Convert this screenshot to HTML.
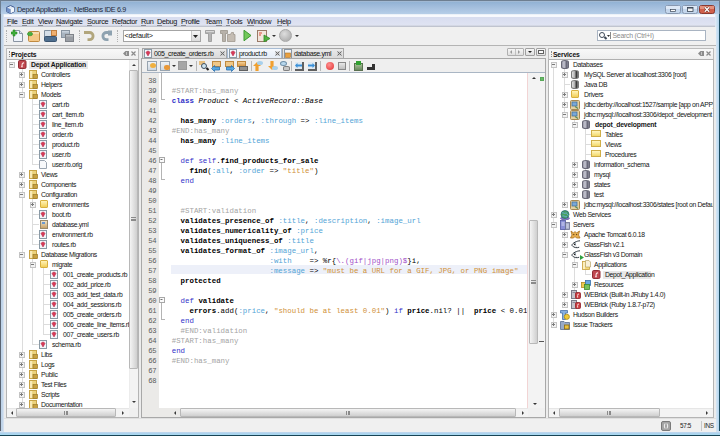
<!DOCTYPE html><html><head><meta charset="utf-8"><style>
*{margin:0;padding:0;box-sizing:border-box}
html,body{width:720px;height:436px;overflow:hidden;background:#f0f0f0}
body{position:relative}
div{position:absolute}
.ui{font-family:"Liberation Sans",sans-serif;font-size:6.8px;letter-spacing:-0.34px;line-height:8px;color:#151515;white-space:nowrap}
.ui b,.bold{font-weight:bold;letter-spacing:-0.17px}
.code{font-family:"Liberation Mono",monospace;font-size:7.41px;line-height:10px;color:#000;white-space:pre}
.exp{width:5px;height:5px;border:1px solid #b4b4b4;border-radius:1px;background:linear-gradient(#ffffff,#e0e0e0)}
.exp i{position:absolute;background:#5a5a5a}
.exp i.h{left:0;top:1px;width:3px;height:1px}
.exp i.v{left:1px;top:0;width:1px;height:3px}
.rbf{width:8px;height:9px;border:1px solid #8a96a6;background:linear-gradient(#ffffff,#e3e8f0)}
.rbf i{position:absolute;left:1px;top:2px;width:4px;height:4px;border-radius:50%;background:#d4303a}
.plf{width:8px;height:9px;border:1px solid #9aa4b2;background:linear-gradient(#ffffff,#e8ecf2)}
.ymf{width:8px;height:9px;border:1px solid #9a8a6a;background:linear-gradient(#efe3c8,#c9a46a)}
.ymf i{position:absolute;left:1px;top:1px;width:3px;height:2px;background:#6a9ad0}
.fold{width:8px;height:8px;background:linear-gradient(#fbe7a0,#e9bf55);border:1px solid #d2a640;border-radius:1px}
.fold i{position:absolute;left:3px;top:3px;width:4px;height:4px;background:#c99b30;border:1px solid #9c7420}
.fold2{width:8px;height:8px;background:linear-gradient(#fff3b8,#f2cf5a);border:1px solid #d8b040;border-radius:1px}
.fold3{width:10px;height:7px;background:linear-gradient(#fff6c0,#f3d86a);border:1px solid #cfae48}
.proj{width:8px;height:9px;background:linear-gradient(#e05a5a,#b52a2a);border:1px solid #8c2020;border-radius:1px}
.proj i{position:absolute;left:2px;top:1px;width:3px;height:6px;border-left:1.5px solid #fff;border-top:1.5px solid #fff}
.db{width:8px;height:9px;border-radius:4px/2px;background:linear-gradient(90deg,#e0e0e0,#b8b8b8 40%,#3a3a3a 75%,#8a8a8a);border:1px solid #7a7a7a}
.dbd{background:linear-gradient(90deg,#9a9aa8,#c8c8d4 35%,#6a6a7a 75%,#8a8a98);border-color:#6a6a78}
u{text-decoration:none;border-bottom:1px solid rgba(40,40,40,.45);display:inline-block;line-height:7px}
.vl{border-left:1px solid #dcdcdc}
.hl{border-top:1px solid #dcdcdc}
</style></head><body><div style="left:0;top:0;width:720px;height:17px;background:linear-gradient(#7a8696 0,#7a8696 1px,#b0c0d4 1px,#92b2d4 2px,#a6c0de 8px,#b6cee8 14px,#f6f8fc 14.6px,#fbfcff 16.5px)"></div>
<div style="left:0px;top:0px;width:720px;height:1px;background:#6e7e90"></div>
<div style="left:0px;top:0px;width:1px;height:16px;background:#6e7e90"></div>
<div style="left:719px;top:0px;width:1px;height:16px;background:#6e7e90"></div>
<svg style="position:absolute;left:6px;top:5px" width="9" height="9" viewBox="0 0 9 9"><path d="M4.5 .5L8.3 2.3V6.7L4.5 8.5L.7 6.7V2.3z" fill="#dfe8f4" stroke="#34508a" stroke-width=".9" stroke-linejoin="round"/><path d="M.9 2.5L4.5 4.2V8.3L.9 6.6z" fill="#7090c8"/><path d="M4.5 4.2L8.1 2.5V6.6L4.5 8.3z" fill="#f4f8fc"/><path d="M4.5 4.2V8.3" stroke="#5a78a8" stroke-width=".5"/></svg>
<div class="ui" style="left:17px;top:6px;font-size:7.2px;letter-spacing:-0.35px;color:#1e2a3a">Depot Application -&nbsp; NetBeans IDE 6.9</div>
<svg style="position:absolute;left:665px;top:5px" width="16" height="9" viewBox="0 0 16 9"><rect x=".5" y=".5" width="15" height="8" rx="2" fill="#c4d6ec" stroke="#8898b0"/><rect x="1" y="1" width="14" height="3" fill="#dde8f6"/><rect x="5.5" y="4.5" width="5" height="2" fill="#fafafa" stroke="#3a4656" stroke-width=".7"/></svg>
<svg style="position:absolute;left:682px;top:5px" width="16" height="9" viewBox="0 0 16 9"><rect x=".5" y=".5" width="15" height="8" rx="2" fill="#c4d6ec" stroke="#8898b0"/><rect x="1" y="1" width="14" height="3" fill="#dde8f6"/><rect x="5.5" y="2.5" width="5.5" height="4" fill="#f4f4f4" stroke="#3a4656" stroke-width=".8"/><rect x="5.5" y="2.3" width="5.5" height="1.2" fill="#3a4656"/></svg>
<svg style="position:absolute;left:699px;top:5px" width="16" height="9" viewBox="0 0 16 9"><rect x=".5" y=".5" width="15" height="8" rx="2" fill="#d0604c" stroke="#8a3a30"/><rect x="1" y="1" width="14" height="3" fill="#e4907c"/><path d="M5.8 2.2L10.2 6.8M10.2 2.2L5.8 6.8" stroke="#5a2018" stroke-width="2.2"/><path d="M5.8 2.2L10.2 6.8M10.2 2.2L5.8 6.8" stroke="#fff" stroke-width="1.3"/></svg>
<div style="left:0px;top:14px;width:4px;height:422px;background:linear-gradient(90deg,#5a6472 0,#5a6472 1px,#bcd2e8 1px,#c4d6ea 3px,#e6eaf2 4px)"></div>
<div style="left:715px;top:14px;width:5px;height:422px;background:linear-gradient(90deg,#e4ecf6,#b8d8f0 70%,#a4d4f0 80%,#1c4c60 80%)"></div>
<div style="left:0px;top:431px;width:720px;height:5px;background:linear-gradient(#dde6f0,#b0d0ec 40%,#a8d8f0 70%,#1a4a5e 74%,#16404f)"></div>
<div style="left:4px;top:16px;width:711px;height:11px;background:linear-gradient(#f8f9fd 0,#f8f9fd .5px,#d8ddef 1.5px,#dfe3f2 9px,#c8ccd6 10px,#b8bcc8 11px)"></div>
<div class="ui" style="left:7px;top:17.6px;font-size:7.3px;letter-spacing:-0.3px;color:#111"><u>F</u>ile</div>
<div class="ui" style="left:22px;top:17.6px;font-size:7.3px;letter-spacing:-0.3px;color:#111"><u>E</u>dit</div>
<div class="ui" style="left:38px;top:17.6px;font-size:7.3px;letter-spacing:-0.3px;color:#111"><u>V</u>iew</div>
<div class="ui" style="left:56px;top:17.6px;font-size:7.3px;letter-spacing:-0.3px;color:#111"><u>N</u>avigate</div>
<div class="ui" style="left:87px;top:17.6px;font-size:7.3px;letter-spacing:-0.3px;color:#111"><u>S</u>ource</div>
<div class="ui" style="left:112px;top:17.6px;font-size:7.3px;letter-spacing:-0.3px;color:#111">Re<u>f</u>actor</div>
<div class="ui" style="left:141px;top:17.6px;font-size:7.3px;letter-spacing:-0.3px;color:#111"><u>R</u>un</div>
<div class="ui" style="left:157px;top:17.6px;font-size:7.3px;letter-spacing:-0.3px;color:#111"><u>D</u>ebug</div>
<div class="ui" style="left:181px;top:17.6px;font-size:7.3px;letter-spacing:-0.3px;color:#111"><u>P</u>rofile</div>
<div class="ui" style="left:205px;top:17.6px;font-size:7.3px;letter-spacing:-0.3px;color:#111">Tea<u>m</u></div>
<div class="ui" style="left:226px;top:17.6px;font-size:7.3px;letter-spacing:-0.3px;color:#111"><u>T</u>ools</div>
<div class="ui" style="left:247px;top:17.6px;font-size:7.3px;letter-spacing:-0.3px;color:#111"><u>W</u>indow</div>
<div class="ui" style="left:277px;top:17.6px;font-size:7.3px;letter-spacing:-0.3px;color:#111"><u>H</u>elp</div>
<div style="left:4px;top:27px;width:712px;height:18px;background:#f0f0f0"></div>
<div style="left:4px;top:45px;width:712px;height:1px;background:#b4b4b4"></div>
<div style="left:6px;top:30px;width:1px;height:12px;border-left:1px dotted #b0b0b0"></div>
<div style="left:79px;top:30px;width:1px;height:12px;border-left:1px dotted #b0b0b0"></div>
<div style="left:117px;top:30px;width:1px;height:12px;border-left:1px dotted #b0b0b0"></div>
<svg style="position:absolute;left:11px;top:29px" width="13" height="14" viewBox="0 0 13 14"><path d="M2.5 1.5h6l3 3v8h-9z" fill="#eef3fa" stroke="#8a94a2"/><path d="M8.5 1.5v3h3" fill="#d8e2ee" stroke="#8a94a2"/><path d="M2 1v2H0v2h2v2h2V5h2V3H4V1z" fill="#3cae3a" stroke="#2a8a28" stroke-width=".6"/></svg>
<svg style="position:absolute;left:27px;top:29px" width="14" height="14" viewBox="0 0 14 14"><rect x="1.5" y="2.5" width="11" height="10" rx="1" fill="#f4c888" stroke="#c08a40"/><rect x="2" y="3" width="10" height="2" fill="#f8dcb0"/><ellipse cx="3" cy="5" rx="2.6" ry="1.8" fill="#48b040" stroke="#2a8a28" stroke-width=".6"/></svg>
<svg style="position:absolute;left:43px;top:29px" width="15" height="14" viewBox="0 0 15 14"><path d="M1.5 1.5h6l1 1v6h-7z" fill="#d4dee8" stroke="#8090a0"/><rect x="8.5" y="1.5" width="5" height="5" fill="#f0b070" stroke="#c08040"/><rect x="1.5" y="7.5" width="12" height="5" rx="1" fill="#4e6e8e" stroke="#3a5470"/></svg>
<svg style="position:absolute;left:61px;top:29px" width="14" height="14" viewBox="0 0 14 14"><rect x="0.5" y="1.5" width="8" height="7" fill="#a8b4c0" stroke="#8894a0"/><rect x="1" y="2" width="7" height="1.5" fill="#c8d2dc"/><rect x="4.5" y="5.5" width="8" height="7" fill="#9a9ea4" stroke="#7e8288"/><rect x="5" y="6" width="7" height="1.5" fill="#b8bcc0"/></svg>
<svg style="position:absolute;left:83px;top:29px" width="13" height="14" viewBox="0 0 13 14"><path d="M1 3.5H6.5A3.6 3.6 0 0 1 6.5 10.7H4.5" fill="none" stroke="#b2a67c" stroke-width="2.8"/></svg>
<svg style="position:absolute;left:100px;top:29px" width="13" height="14" viewBox="0 0 13 14"><path d="M12 3.5H6.5A3.6 3.6 0 0 0 6.5 10.7H8.5" fill="none" stroke="#8ea2b0" stroke-width="2.8"/><rect x="8" y="1.5" width="4" height="5" fill="#8ea2b0"/></svg>
<div style="left:123px;top:30px;width:78px;height:12px;border:1px solid #a4a4a4;background:#fff"></div>
<div class="ui" style="left:124.5px;top:32px;font-size:7.2px;letter-spacing:-0.2px;color:#111">&lt;default&gt;</div>
<div style="left:191px;top:31px;width:9px;height:10px;background:linear-gradient(#f4f4f4,#dcdcdc);border-left:1px solid #c8c8c8"></div>
<div style="left:193px;top:35px;width:5px;height:3px;background:#222;clip-path:polygon(0 0,100% 0,50% 100%)"></div>
<svg style="position:absolute;left:205px;top:29px" width="11" height="13" viewBox="0 0 11 13"><path d="M0.5 1.5h9v3h-3v8h-3v-8h-3z" fill="#b4b4b4" stroke="#959595" stroke-width=".8"/><rect x="1" y="2" width="8" height="1" fill="#d8d8d8"/></svg>
<svg style="position:absolute;left:220px;top:29px" width="16" height="13" viewBox="0 0 16 13"><path d="M0.5 1.5h7v3h-2v8h-3v-8h-2z" fill="#b8b2aa" stroke="#9a948c" stroke-width=".8"/><path d="M7.5 5.5h3l1-2h2v2h1.5v7h-7.5z" fill="#c4bcb2" stroke="#a0988e" stroke-width=".8"/></svg>
<svg style="position:absolute;left:243px;top:29px" width="9" height="13" viewBox="0 0 9 13"><path d="M1 1.2L8 6.5 1 11.8z" fill="#72c85a" stroke="#3a9a30" stroke-width="1"/></svg>
<svg style="position:absolute;left:256px;top:29px" width="16" height="13" viewBox="0 0 16 13"><rect x="1.5" y="1.5" width="9" height="11" fill="#f2e6dc" stroke="#9a7a68"/><path d="M3 4h3M3 6h2" stroke="#d84a3a" stroke-width="1.2"/><path d="M8 6l6 3.5-6 3.5z" fill="#52b040" stroke="#2e8a26" stroke-width=".8"/></svg>
<div style="left:272px;top:35px;width:4px;height:2px;background:#333;clip-path:polygon(0 0,100% 0,50% 100%)"></div>
<div style="left:279px;top:29px;width:13px;height:13px;border-radius:50%;background:radial-gradient(circle at 40% 35%,#dedede,#b4b4b4 70%,#a4a4a4);border:1px solid #a8a8a8"></div>
<div style="left:295px;top:35px;width:4px;height:2px;background:#333;clip-path:polygon(0 0,100% 0,50% 100%)"></div>
<div style="left:597px;top:30px;width:109px;height:11px;border:1px solid #a9b4c2;background:#fff"></div>
<div style="left:599px;top:32px;width:6px;height:6px;border:1.5px solid #404a58;border-radius:50%"></div><div style="left:604px;top:37px;width:3px;height:2px;background:#404a58;transform:rotate(45deg)"></div>
<div style="left:607px;top:35px;width:3px;height:2px;background:#333;clip-path:polygon(0 0,100% 0,50% 100%)"></div>
<div style="left:610px;top:32px;width:1px;height:7px;background:#888"></div>
<div class="ui" style="left:612.5px;top:32px;font-size:6.9px;letter-spacing:-0.25px;color:#8a8a8a">Search (Ctrl+I)</div>
<div style="left:4px;top:46px;width:712px;height:372px;background:#ececec"></div>
<div style="left:6px;top:48px;width:133px;height:370px;border:1px solid #b4b4b4;background:#fff"></div>
<div style="left:6px;top:48px;width:133px;height:12px;border:1px solid #bcbcbc;border-bottom-color:#b0b0b0;background:linear-gradient(#f8f8f8,#eeeeee)"></div>
<div style="left:9px;top:51px;width:1px;height:6px;border-left:1px dotted #8a8a8a"></div>
<div class="ui" style="left:11px;top:50.6px;font-weight:bold;font-size:6.8px;letter-spacing:-0.17px;color:#111">Projects</div>
<svg style="position:absolute;left:123px;top:51px" width="6" height="6" viewBox="0 0 6 6"><path d="M0 2.5L2.5 0H6V5H2.5z" fill="#8c8c8c"/><path d="M3.5 1V4" stroke="#d0d0d0" stroke-width=".8"/></svg>
<svg style="position:absolute;left:131px;top:51px" width="5" height="5" viewBox="0 0 5 5"><path d="M.5 .5L4.5 4.5M4.5 .5L.5 4.5" stroke="#8a8a8a" stroke-width="1.2"/></svg>
<div style="left:129px;top:60px;width:9px;height:348px;background:#f3f3f3;border-left:1px solid #ececec"></div>
<div style="left:132px;top:64px;width:4px;height:2px;background:#3a3a3a;clip-path:polygon(50% 0,100% 100%,0 100%)"></div>
<div style="left:132px;top:401px;width:4px;height:2px;background:#3a3a3a;clip-path:polygon(0 0,100% 0,50% 100%)"></div>
<div style="left:129px;top:70px;width:9px;height:299px;border:1px solid #b8b8b8;border-radius:1px;background:linear-gradient(90deg,#f4f4f4,#dedede 60%,#cfcfcf)"></div>
<div style="left:131px;top:217px;width:5px;height:4px;border-top:1px solid #8a8a8a;border-bottom:1px solid #8a8a8a"></div><div style="left:131px;top:219px;width:5px;height:1px;background:#8a8a8a"></div>
<div style="left:7px;top:408px;width:122px;height:9px;background:#f3f3f3;border-top:1px solid #e6e6e6"></div>
<div style="left:11px;top:411px;width:2px;height:4px;background:#3a3a3a;clip-path:polygon(100% 0,100% 100%,0 50%)"></div>
<div style="left:122px;top:411px;width:2px;height:4px;background:#3a3a3a;clip-path:polygon(0 0,100% 50%,0 100%)"></div>
<div style="left:16px;top:408px;width:100px;height:9px;border:1px solid #b8b8b8;border-radius:1px;background:linear-gradient(#f4f4f4,#dedede 60%,#cfcfcf)"></div>
<div style="left:64px;top:411px;width:4px;height:4px;border-left:1px solid #8a8a8a;border-right:1px solid #8a8a8a"></div><div style="left:66px;top:411px;width:1px;height:4px;background:#8a8a8a"></div>
<div style="left:129px;top:408px;width:9px;height:9px;background:#f0f0f0"></div>
<div style="left:7px;top:59px;width:122px;height:349px;overflow:hidden"><div style="left:-7px;top:-59px;width:720px;height:436px">
<div class="vl" style="left:22px;top:68px;width:1px;height:337px"></div>
<div class="vl" style="left:32px;top:98px;width:1px;height:67px"></div>
<div class="vl" style="left:32px;top:198px;width:1px;height:47px"></div>
<div class="vl" style="left:32px;top:258px;width:1px;height:87px"></div>
<div class="vl" style="left:43px;top:268px;width:1px;height:67px"></div>
<div class="hl" style="left:33px;top:104px;width:6px;height:1px"></div>
<div class="hl" style="left:33px;top:114px;width:6px;height:1px"></div>
<div class="hl" style="left:33px;top:124px;width:6px;height:1px"></div>
<div class="hl" style="left:33px;top:134px;width:6px;height:1px"></div>
<div class="hl" style="left:33px;top:144px;width:6px;height:1px"></div>
<div class="hl" style="left:33px;top:154px;width:6px;height:1px"></div>
<div class="hl" style="left:33px;top:164px;width:6px;height:1px"></div>
<div class="hl" style="left:33px;top:214px;width:6px;height:1px"></div>
<div class="hl" style="left:33px;top:224px;width:6px;height:1px"></div>
<div class="hl" style="left:33px;top:234px;width:6px;height:1px"></div>
<div class="hl" style="left:33px;top:244px;width:6px;height:1px"></div>
<div class="hl" style="left:33px;top:344px;width:6px;height:1px"></div>
<div class="hl" style="left:44px;top:274px;width:6px;height:1px"></div>
<div class="hl" style="left:44px;top:284px;width:6px;height:1px"></div>
<div class="hl" style="left:44px;top:294px;width:6px;height:1px"></div>
<div class="hl" style="left:44px;top:304px;width:6px;height:1px"></div>
<div class="hl" style="left:44px;top:314px;width:6px;height:1px"></div>
<div class="hl" style="left:44px;top:324px;width:6px;height:1px"></div>
<div class="hl" style="left:44px;top:334px;width:6px;height:1px"></div>
<div style="left:29px;top:61px;width:59px;height:8px;background:#e8e8e8"></div>
<svg style="position:absolute;left:9px;top:62px" width="6" height="6"><rect x=".5" y=".5" width="5" height="5" fill="#f2f2f2" stroke="#c4c4c4"/><path d="M1 2.5H4" stroke="#7a7a7a"/></svg>
<svg style="position:absolute;left:18px;top:60px" width="9" height="9"><rect x=".5" y=".5" width="7.5" height="8" rx="1.2" fill="#c04850" stroke="#902c34"/><path d="M6 2.2C4.2 2.2 3.4 3.6 3.6 5.2L3 7.2H4.8L4.6 5.4C4.5 4.2 5 3.6 6.2 3.6z" fill="#fbe8e8"/></svg>
<div class="ui" style="left:31px;top:61.1px;font-weight:bold;letter-spacing:-0.17px;">Depot Application</div>
<svg style="position:absolute;left:19px;top:72px" width="6" height="6"><rect x=".5" y=".5" width="5" height="5" fill="#f2f2f2" stroke="#c4c4c4"/><path d="M1 2.5H4" stroke="#7a7a7a"/><path d="M2.5 1V4" stroke="#7a7a7a"/></svg>
<svg style="position:absolute;left:29px;top:70px" width="9" height="9"><rect x=".5" y=".5" width="7" height="8" fill="#ecd27c" stroke="#c8a448"/><rect x="1" y="1" width="2.2" height="7" fill="#f8eab8"/><rect x="4" y="4.5" width="4.5" height="4" fill="#c8a040" stroke="#9a7a28" stroke-width=".7"/></svg>
<div class="ui" style="left:41px;top:71.1px;">Controllers</div>
<svg style="position:absolute;left:19px;top:82px" width="6" height="6"><rect x=".5" y=".5" width="5" height="5" fill="#f2f2f2" stroke="#c4c4c4"/><path d="M1 2.5H4" stroke="#7a7a7a"/><path d="M2.5 1V4" stroke="#7a7a7a"/></svg>
<svg style="position:absolute;left:29px;top:80px" width="9" height="9"><rect x=".5" y=".5" width="7" height="8" fill="#ecd27c" stroke="#c8a448"/><rect x="1" y="1" width="2.2" height="7" fill="#f8eab8"/><rect x="4" y="4.5" width="4.5" height="4" fill="#c8a040" stroke="#9a7a28" stroke-width=".7"/></svg>
<div class="ui" style="left:41px;top:81.1px;">Helpers</div>
<svg style="position:absolute;left:19px;top:92px" width="6" height="6"><rect x=".5" y=".5" width="5" height="5" fill="#f2f2f2" stroke="#c4c4c4"/><path d="M1 2.5H4" stroke="#7a7a7a"/></svg>
<svg style="position:absolute;left:29px;top:90px" width="9" height="9"><rect x=".5" y=".5" width="7" height="8" fill="#ecd27c" stroke="#c8a448"/><rect x="1" y="1" width="2.2" height="7" fill="#f8eab8"/><rect x="4" y="4.5" width="4.5" height="4" fill="#c8a040" stroke="#9a7a28" stroke-width=".7"/></svg>
<div class="ui" style="left:41px;top:91.1px;">Models</div>
<svg style="position:absolute;left:39px;top:100px" width="9" height="9"><rect x=".5" y=".5" width="7" height="8" fill="#f4f6fa" stroke="#8a9aa6"/><path d="M2 3.5L3 2.2H5L6 3.5L4 7z" fill="#d83a58" stroke="#b02040" stroke-width=".5"/></svg>
<div class="ui" style="left:52px;top:101.1px;">cart.rb</div>
<svg style="position:absolute;left:39px;top:110px" width="9" height="9"><rect x=".5" y=".5" width="7" height="8" fill="#f4f6fa" stroke="#8a9aa6"/><path d="M2 3.5L3 2.2H5L6 3.5L4 7z" fill="#d83a58" stroke="#b02040" stroke-width=".5"/></svg>
<div class="ui" style="left:52px;top:111.1px;">cart_item.rb</div>
<svg style="position:absolute;left:39px;top:120px" width="9" height="9"><rect x=".5" y=".5" width="7" height="8" fill="#f4f6fa" stroke="#8a9aa6"/><path d="M2 3.5L3 2.2H5L6 3.5L4 7z" fill="#d83a58" stroke="#b02040" stroke-width=".5"/></svg>
<div class="ui" style="left:52px;top:121.1px;">line_item.rb</div>
<svg style="position:absolute;left:39px;top:130px" width="9" height="9"><rect x=".5" y=".5" width="7" height="8" fill="#f4f6fa" stroke="#8a9aa6"/><path d="M2 3.5L3 2.2H5L6 3.5L4 7z" fill="#d83a58" stroke="#b02040" stroke-width=".5"/></svg>
<div class="ui" style="left:52px;top:131.1px;">order.rb</div>
<svg style="position:absolute;left:39px;top:140px" width="9" height="9"><rect x=".5" y=".5" width="7" height="8" fill="#f4f6fa" stroke="#8a9aa6"/><path d="M2 3.5L3 2.2H5L6 3.5L4 7z" fill="#d83a58" stroke="#b02040" stroke-width=".5"/></svg>
<div class="ui" style="left:52px;top:141.1px;">product.rb</div>
<svg style="position:absolute;left:39px;top:150px" width="9" height="9"><rect x=".5" y=".5" width="7" height="8" fill="#f4f6fa" stroke="#8a9aa6"/><path d="M2 3.5L3 2.2H5L6 3.5L4 7z" fill="#d83a58" stroke="#b02040" stroke-width=".5"/></svg>
<div class="ui" style="left:52px;top:151.1px;">user.rb</div>
<svg style="position:absolute;left:39px;top:160px" width="9" height="9"><path d="M.5 .5H5.5L7.5 2.5V8.5H.5z" fill="#f8f9fb" stroke="#9aa4b0"/></svg>
<div class="ui" style="left:52px;top:161.1px;">user.rb.orig</div>
<svg style="position:absolute;left:19px;top:172px" width="6" height="6"><rect x=".5" y=".5" width="5" height="5" fill="#f2f2f2" stroke="#c4c4c4"/><path d="M1 2.5H4" stroke="#7a7a7a"/><path d="M2.5 1V4" stroke="#7a7a7a"/></svg>
<svg style="position:absolute;left:29px;top:170px" width="9" height="9"><rect x=".5" y=".5" width="7" height="8" fill="#ecd27c" stroke="#c8a448"/><rect x="1" y="1" width="2.2" height="7" fill="#f8eab8"/><rect x="4" y="4.5" width="4.5" height="4" fill="#c8a040" stroke="#9a7a28" stroke-width=".7"/></svg>
<div class="ui" style="left:41px;top:171.1px;">Views</div>
<svg style="position:absolute;left:19px;top:182px" width="6" height="6"><rect x=".5" y=".5" width="5" height="5" fill="#f2f2f2" stroke="#c4c4c4"/><path d="M1 2.5H4" stroke="#7a7a7a"/><path d="M2.5 1V4" stroke="#7a7a7a"/></svg>
<svg style="position:absolute;left:29px;top:180px" width="9" height="9"><rect x=".5" y=".5" width="7" height="8" fill="#ecd27c" stroke="#c8a448"/><rect x="1" y="1" width="2.2" height="7" fill="#f8eab8"/><rect x="4" y="4.5" width="4.5" height="4" fill="#c8a040" stroke="#9a7a28" stroke-width=".7"/></svg>
<div class="ui" style="left:41px;top:181.1px;">Components</div>
<svg style="position:absolute;left:19px;top:192px" width="6" height="6"><rect x=".5" y=".5" width="5" height="5" fill="#f2f2f2" stroke="#c4c4c4"/><path d="M1 2.5H4" stroke="#7a7a7a"/></svg>
<svg style="position:absolute;left:29px;top:190px" width="9" height="9"><rect x=".5" y=".5" width="7" height="8" fill="#ecd27c" stroke="#c8a448"/><rect x="1" y="1" width="2.2" height="7" fill="#f8eab8"/><rect x="4" y="4.5" width="4.5" height="4" fill="#c8a040" stroke="#9a7a28" stroke-width=".7"/></svg>
<div class="ui" style="left:41px;top:191.1px;">Configuration</div>
<svg style="position:absolute;left:30px;top:202px" width="6" height="6"><rect x=".5" y=".5" width="5" height="5" fill="#f2f2f2" stroke="#c4c4c4"/><path d="M1 2.5H4" stroke="#7a7a7a"/><path d="M2.5 1V4" stroke="#7a7a7a"/></svg>
<div class="fold2" style="left:40px;top:200px"></div>
<div class="ui" style="left:52px;top:201.1px;">environments</div>
<svg style="position:absolute;left:39px;top:210px" width="9" height="9"><rect x=".5" y=".5" width="7" height="8" fill="#f4f6fa" stroke="#8a9aa6"/><path d="M2 3.5L3 2.2H5L6 3.5L4 7z" fill="#d83a58" stroke="#b02040" stroke-width=".5"/></svg>
<div class="ui" style="left:52px;top:211.1px;">boot.rb</div>
<div class="ymf" style="left:40px;top:220px"><i></i></div>
<div class="ui" style="left:52px;top:221.1px;">database.yml</div>
<svg style="position:absolute;left:39px;top:230px" width="9" height="9"><rect x=".5" y=".5" width="7" height="8" fill="#f4f6fa" stroke="#8a9aa6"/><path d="M2 3.5L3 2.2H5L6 3.5L4 7z" fill="#d83a58" stroke="#b02040" stroke-width=".5"/></svg>
<div class="ui" style="left:52px;top:231.1px;">environment.rb</div>
<svg style="position:absolute;left:39px;top:240px" width="9" height="9"><rect x=".5" y=".5" width="7" height="8" fill="#f4f6fa" stroke="#8a9aa6"/><path d="M2 3.5L3 2.2H5L6 3.5L4 7z" fill="#d83a58" stroke="#b02040" stroke-width=".5"/></svg>
<div class="ui" style="left:52px;top:241.1px;">routes.rb</div>
<svg style="position:absolute;left:19px;top:252px" width="6" height="6"><rect x=".5" y=".5" width="5" height="5" fill="#f2f2f2" stroke="#c4c4c4"/><path d="M1 2.5H4" stroke="#7a7a7a"/></svg>
<svg style="position:absolute;left:29px;top:250px" width="9" height="9"><rect x=".5" y=".5" width="7" height="8" fill="#ecd27c" stroke="#c8a448"/><rect x="1" y="1" width="2.2" height="7" fill="#f8eab8"/><rect x="4" y="4.5" width="4.5" height="4" fill="#c8a040" stroke="#9a7a28" stroke-width=".7"/></svg>
<div class="ui" style="left:41px;top:251.1px;">Database Migrations</div>
<svg style="position:absolute;left:30px;top:262px" width="6" height="6"><rect x=".5" y=".5" width="5" height="5" fill="#f2f2f2" stroke="#c4c4c4"/><path d="M1 2.5H4" stroke="#7a7a7a"/></svg>
<div class="fold2" style="left:40px;top:260px"></div>
<div class="ui" style="left:52px;top:261.1px;">migrate</div>
<svg style="position:absolute;left:50px;top:270px" width="9" height="9"><rect x=".5" y=".5" width="7" height="8" fill="#f4f6fa" stroke="#8a9aa6"/><path d="M2 3.5L3 2.2H5L6 3.5L4 7z" fill="#d83a58" stroke="#b02040" stroke-width=".5"/></svg>
<div class="ui" style="left:63px;top:271.1px;">001_create_products.rb</div>
<svg style="position:absolute;left:50px;top:280px" width="9" height="9"><rect x=".5" y=".5" width="7" height="8" fill="#f4f6fa" stroke="#8a9aa6"/><path d="M2 3.5L3 2.2H5L6 3.5L4 7z" fill="#d83a58" stroke="#b02040" stroke-width=".5"/></svg>
<div class="ui" style="left:63px;top:281.1px;">002_add_price.rb</div>
<svg style="position:absolute;left:50px;top:290px" width="9" height="9"><rect x=".5" y=".5" width="7" height="8" fill="#f4f6fa" stroke="#8a9aa6"/><path d="M2 3.5L3 2.2H5L6 3.5L4 7z" fill="#d83a58" stroke="#b02040" stroke-width=".5"/></svg>
<div class="ui" style="left:63px;top:291.1px;">003_add_test_data.rb</div>
<svg style="position:absolute;left:50px;top:300px" width="9" height="9"><rect x=".5" y=".5" width="7" height="8" fill="#f4f6fa" stroke="#8a9aa6"/><path d="M2 3.5L3 2.2H5L6 3.5L4 7z" fill="#d83a58" stroke="#b02040" stroke-width=".5"/></svg>
<div class="ui" style="left:63px;top:301.1px;">004_add_sessions.rb</div>
<svg style="position:absolute;left:50px;top:310px" width="9" height="9"><rect x=".5" y=".5" width="7" height="8" fill="#f4f6fa" stroke="#8a9aa6"/><path d="M2 3.5L3 2.2H5L6 3.5L4 7z" fill="#d83a58" stroke="#b02040" stroke-width=".5"/></svg>
<div class="ui" style="left:63px;top:311.1px;">005_create_orders.rb</div>
<svg style="position:absolute;left:50px;top:320px" width="9" height="9"><rect x=".5" y=".5" width="7" height="8" fill="#f4f6fa" stroke="#8a9aa6"/><path d="M2 3.5L3 2.2H5L6 3.5L4 7z" fill="#d83a58" stroke="#b02040" stroke-width=".5"/></svg>
<div class="ui" style="left:63px;top:321.1px;">006_create_line_items.rb</div>
<svg style="position:absolute;left:50px;top:330px" width="9" height="9"><rect x=".5" y=".5" width="7" height="8" fill="#f4f6fa" stroke="#8a9aa6"/><path d="M2 3.5L3 2.2H5L6 3.5L4 7z" fill="#d83a58" stroke="#b02040" stroke-width=".5"/></svg>
<div class="ui" style="left:63px;top:331.1px;">007_create_users.rb</div>
<svg style="position:absolute;left:39px;top:340px" width="9" height="9"><rect x=".5" y=".5" width="7" height="8" fill="#f4f6fa" stroke="#8a9aa6"/><path d="M2 3.5L3 2.2H5L6 3.5L4 7z" fill="#d83a58" stroke="#b02040" stroke-width=".5"/></svg>
<div class="ui" style="left:52px;top:341.1px;">schema.rb</div>
<svg style="position:absolute;left:19px;top:352px" width="6" height="6"><rect x=".5" y=".5" width="5" height="5" fill="#f2f2f2" stroke="#c4c4c4"/><path d="M1 2.5H4" stroke="#7a7a7a"/><path d="M2.5 1V4" stroke="#7a7a7a"/></svg>
<svg style="position:absolute;left:29px;top:350px" width="9" height="9"><rect x=".5" y=".5" width="7" height="8" fill="#ecd27c" stroke="#c8a448"/><rect x="1" y="1" width="2.2" height="7" fill="#f8eab8"/><rect x="4" y="4.5" width="4.5" height="4" fill="#c8a040" stroke="#9a7a28" stroke-width=".7"/></svg>
<div class="ui" style="left:41px;top:351.1px;">Libs</div>
<svg style="position:absolute;left:19px;top:362px" width="6" height="6"><rect x=".5" y=".5" width="5" height="5" fill="#f2f2f2" stroke="#c4c4c4"/><path d="M1 2.5H4" stroke="#7a7a7a"/><path d="M2.5 1V4" stroke="#7a7a7a"/></svg>
<svg style="position:absolute;left:29px;top:360px" width="9" height="9"><rect x=".5" y=".5" width="7" height="8" fill="#ecd27c" stroke="#c8a448"/><rect x="1" y="1" width="2.2" height="7" fill="#f8eab8"/><rect x="4" y="4.5" width="4.5" height="4" fill="#c8a040" stroke="#9a7a28" stroke-width=".7"/></svg>
<div class="ui" style="left:41px;top:361.1px;">Logs</div>
<svg style="position:absolute;left:19px;top:372px" width="6" height="6"><rect x=".5" y=".5" width="5" height="5" fill="#f2f2f2" stroke="#c4c4c4"/><path d="M1 2.5H4" stroke="#7a7a7a"/><path d="M2.5 1V4" stroke="#7a7a7a"/></svg>
<svg style="position:absolute;left:29px;top:370px" width="9" height="9"><rect x=".5" y=".5" width="7" height="8" fill="#ecd27c" stroke="#c8a448"/><rect x="1" y="1" width="2.2" height="7" fill="#f8eab8"/><rect x="4" y="4.5" width="4.5" height="4" fill="#c8a040" stroke="#9a7a28" stroke-width=".7"/></svg>
<div class="ui" style="left:41px;top:371.1px;">Public</div>
<svg style="position:absolute;left:19px;top:382px" width="6" height="6"><rect x=".5" y=".5" width="5" height="5" fill="#f2f2f2" stroke="#c4c4c4"/><path d="M1 2.5H4" stroke="#7a7a7a"/><path d="M2.5 1V4" stroke="#7a7a7a"/></svg>
<svg style="position:absolute;left:29px;top:380px" width="9" height="9"><rect x=".5" y=".5" width="7" height="8" fill="#ecd27c" stroke="#c8a448"/><rect x="1" y="1" width="2.2" height="7" fill="#f8eab8"/><rect x="4" y="4.5" width="4.5" height="4" fill="#c8a040" stroke="#9a7a28" stroke-width=".7"/></svg>
<div class="ui" style="left:41px;top:381.1px;">Test Files</div>
<svg style="position:absolute;left:19px;top:392px" width="6" height="6"><rect x=".5" y=".5" width="5" height="5" fill="#f2f2f2" stroke="#c4c4c4"/><path d="M1 2.5H4" stroke="#7a7a7a"/><path d="M2.5 1V4" stroke="#7a7a7a"/></svg>
<svg style="position:absolute;left:29px;top:390px" width="9" height="9"><rect x=".5" y=".5" width="7" height="8" fill="#ecd27c" stroke="#c8a448"/><rect x="1" y="1" width="2.2" height="7" fill="#f8eab8"/><rect x="4" y="4.5" width="4.5" height="4" fill="#c8a040" stroke="#9a7a28" stroke-width=".7"/></svg>
<div class="ui" style="left:41px;top:391.1px;">Scripts</div>
<svg style="position:absolute;left:19px;top:402px" width="6" height="6"><rect x=".5" y=".5" width="5" height="5" fill="#f2f2f2" stroke="#c4c4c4"/><path d="M1 2.5H4" stroke="#7a7a7a"/><path d="M2.5 1V4" stroke="#7a7a7a"/></svg>
<svg style="position:absolute;left:29px;top:400px" width="9" height="9"><rect x=".5" y=".5" width="7" height="8" fill="#ecd27c" stroke="#c8a448"/><rect x="1" y="1" width="2.2" height="7" fill="#f8eab8"/><rect x="4" y="4.5" width="4.5" height="4" fill="#c8a040" stroke="#9a7a28" stroke-width=".7"/></svg>
<div class="ui" style="left:41px;top:401.1px;">Documentation</div>
</div></div>
<div style="left:142px;top:48px;width:85px;height:11px;border:1px solid #a6a6a6;border-bottom:none;background:linear-gradient(#e9e9e9,#d9d9d9)"></div>
<svg style="position:absolute;left:144px;top:49px" width="9" height="9"><rect x=".5" y=".5" width="7" height="8" fill="#f4f6fa" stroke="#8a9aa6"/><path d="M2 3.5L3 2.2H5L6 3.5L4 7z" fill="#d83a58" stroke="#b02040" stroke-width=".5"/></svg>
<div class="ui" style="left:154px;top:50px;font-size:7.0px;letter-spacing:-0.37px;color:#111">005_create_orders.rb</div>
<svg style="position:absolute;left:220px;top:51px" width="5" height="5"><rect x=".5" y=".5" width="4" height="4" fill="#c4c4c4"/><path d="M0.5 0.5L4.5 4.5M4.5 0.5L0.5 4.5" stroke="#6a6a6a" stroke-width="1"/></svg>
<div style="left:282px;top:48px;width:62px;height:11px;border:1px solid #a6a6a6;border-bottom:none;background:linear-gradient(#e9e9e9,#d9d9d9)"></div>
<svg style="position:absolute;left:284px;top:49px" width="9" height="10" viewBox="0 0 9 10"><rect x=".5" y=".5" width="7" height="9" fill="#f0f2f6" stroke="#8a96a4"/><rect x="1.5" y="4" width="5" height="4.5" fill="#e8a040" stroke="#b07020" stroke-width=".6"/></svg>
<div class="ui" style="left:294px;top:50px;font-size:7.0px;letter-spacing:-0.37px;color:#111">database.yml</div>
<svg style="position:absolute;left:337px;top:51px" width="5" height="5"><rect x=".5" y=".5" width="4" height="4" fill="#c4c4c4"/><path d="M0.5 0.5L4.5 4.5M4.5 0.5L0.5 4.5" stroke="#6a6a6a" stroke-width="1"/></svg>
<div style="left:227px;top:48px;width:55px;height:11px;border:1px solid #a8bcd4;border-bottom:none;background:linear-gradient(#f6f9fd,#e4ecf6)"></div>
<svg style="position:absolute;left:229px;top:49px" width="9" height="9"><rect x=".5" y=".5" width="7" height="8" fill="#f4f6fa" stroke="#8a9aa6"/><path d="M2 3.5L3 2.2H5L6 3.5L4 7z" fill="#d83a58" stroke="#b02040" stroke-width=".5"/></svg>
<div class="ui" style="left:239px;top:50px;font-size:7.0px;letter-spacing:-0.37px;color:#111">product.rb</div>
<svg style="position:absolute;left:275px;top:51px" width="5" height="5"><rect x=".5" y=".5" width="4" height="4" fill="#c4c4c4"/><path d="M0.5 0.5L4.5 4.5M4.5 0.5L0.5 4.5" stroke="#6a6a6a" stroke-width="1"/></svg>
<div style="left:507px;top:48px;width:17px;height:8px;border:1px solid #b0b0b0;border-radius:1px;background:linear-gradient(#f6f6f6,#e0e0e0)"></div>
<div style="left:515px;top:49px;width:1px;height:6px;background:#c0c0c0"></div>
<div style="left:510px;top:50px;width:2px;height:4px;background:#9a9a9a;clip-path:polygon(100% 0,100% 100%,0 50%)"></div>
<div style="left:518px;top:50px;width:2px;height:4px;background:#9a9a9a;clip-path:polygon(0 0,100% 50%,0 100%)"></div>
<div style="left:525px;top:48px;width:10px;height:8px;border:1px solid #a0a0a0;border-radius:1px;background:linear-gradient(#f6f6f6,#e0e0e0)"></div>
<div style="left:528px;top:51px;width:4px;height:2px;background:#222;clip-path:polygon(0 0,100% 0,50% 100%)"></div>
<div style="left:536px;top:48px;width:10px;height:8px;border:1px solid #a0a0a0;border-radius:1px;background:linear-gradient(#f6f6f6,#e0e0e0)"></div>
<div style="left:538px;top:50px;width:6px;height:4px;border:1px solid #606060;border-top-width:1.5px;background:#fafafa"></div>
<div style="left:141px;top:58px;width:405px;height:360px;border:1px solid #a8a8a8;background:#fff"></div>
<div style="left:142px;top:59px;width:403px;height:14px;background:#efefef;border-bottom:1px solid #aab6c4"></div>
<div style="left:147px;top:61px;width:10px;height:10px;border:1px solid #98a4b0;background:linear-gradient(#eef2f6,#cfd8e2)"></div>
<div style="left:150px;top:63px;width:6px;height:5px;border-radius:50%;background:#f0b040"></div>
<div style="left:160px;top:61px;width:10px;height:10px;border:1px solid #98a4b0;background:linear-gradient(#eef2f6,#cfd8e2)"></div>
<div style="left:164px;top:65px;width:6px;height:5px;border-radius:40%;background:#e89838"></div>
<div style="left:172px;top:65px;width:4px;height:2px;background:#333;clip-path:polygon(0 0,100% 0,50% 100%)"></div>
<div style="left:178px;top:61px;width:10px;height:10px;width:9px;height:9px;background:#a6a6a6;border:1px solid #9a9a9a"></div>
<div style="left:189px;top:65px;width:4px;height:2px;background:#333;clip-path:polygon(0 0,100% 0,50% 100%)"></div>
<div style="left:196px;top:61px;width:1px;height:10px;background:#b8b8b8"></div>
<div style="left:199px;top:61px;width:6px;height:4px;background:#e8c080"></div>
<div style="left:201px;top:63px;width:6px;height:6px;border:1.5px solid #405060;border-radius:50%;background:#cde4f0"></div>
<div style="left:206px;top:68px;width:3px;height:2px;background:#222;transform:rotate(45deg)"></div>
<svg style="position:absolute;left:211px;top:60px" width="11" height="12" viewBox="0 0 11 12"><rect x="1.5" y="1.5" width="8" height="5" fill="#f0c888" stroke="#c08a40"/><path d="M0.5 8.5L3.5 5.5V7H8.5V10H3.5V11.5z" fill="#5aa8e0" stroke="#2a70b0" stroke-width=".8"/></svg>
<svg style="position:absolute;left:224px;top:60px" width="11" height="12" viewBox="0 0 11 12"><rect x="1.5" y="1.5" width="8" height="5" fill="#f0c888" stroke="#c08a40"/><path d="M10.5 8.5L7.5 5.5V7H2.5V10H7.5V11.5z" fill="#5aa8e0" stroke="#2a70b0" stroke-width=".8"/></svg>
<div style="left:237px;top:61px;width:9px;height:6px;background:linear-gradient(#f4d098,#d89848);border:1px solid #c08a40"></div>
<div style="left:239px;top:66px;width:9px;height:5px;background:#909090;border:1px solid #606060"></div>
<div style="left:251px;top:61px;width:1px;height:10px;background:#b8b8b8"></div>
<div style="left:253px;top:62px;width:8px;height:9px;background:#f0a030;clip-path:polygon(50% 0,100% 45%,70% 45%,70% 100%,30% 100%,30% 45%,0 45%)"></div>
<div style="left:257px;top:61px;width:6px;height:4px;border-radius:50%;background:#a8d0ec"></div>
<div style="left:268px;top:61px;width:8px;height:9px;background:#f0a030;clip-path:polygon(30% 0,70% 0,70% 55%,100% 55%,50% 100%,0 55%,30% 55%)"></div>
<div style="left:272px;top:66px;width:6px;height:4px;border-radius:50%;background:#a8d0ec"></div>
<div style="left:280px;top:61px;width:7px;height:5px;border-radius:50%;background:#b8d8ee;border:1px solid #7090a8"></div>
<div style="left:283px;top:66px;width:7px;height:5px;border-radius:30%;background:#c8c8c8;border:1px solid #808080"></div>
<div style="left:291px;top:61px;width:1px;height:10px;background:#b8b8b8"></div>
<div style="left:295px;top:62px;width:9px;height:9px;border-right:2px solid #606060;border-bottom:2px solid #606060;background:#dfe8f0"></div>
<div style="left:295px;top:63px;width:7px;height:5px;background:#3a90d8;clip-path:polygon(0 50%,35% 0,35% 30%,100% 30%,100% 70%,35% 70%,35% 100%)"></div>
<div style="left:308px;top:62px;width:9px;height:9px;border-right:2px solid #606060;border-bottom:2px solid #606060;background:#dfe8f0"></div>
<div style="left:308px;top:63px;width:7px;height:5px;background:#3a90d8;clip-path:polygon(100% 50%,65% 0,65% 30%,0 30%,0 70%,65% 70%,65% 100%)"></div>
<div style="left:320px;top:61px;width:1px;height:10px;background:#b8b8b8"></div>
<div style="left:326px;top:62px;width:8px;height:8px;border-radius:50%;background:radial-gradient(circle at 40% 35%,#ff9090,#e03030)"></div>
<div style="left:338px;top:62px;width:8px;height:8px;border:1px solid #8a8a8a;background:linear-gradient(#e8e8e8,#c0c0c0)"></div>
<div style="left:349px;top:61px;width:1px;height:10px;background:#b8b8b8"></div>
<div style="left:354px;top:63px;width:9px;height:8px;background:linear-gradient(#a8c098,#6a8a60);border:1px solid #5a7050"></div>
<div style="left:356px;top:61px;width:5px;height:4px;background:#30a030"></div>
<div style="left:367px;top:67px;width:8px;height:3px;background:#333"></div><div style="left:372px;top:64px;width:3px;height:4px;background:#333"></div>
<div style="left:142px;top:73px;width:17px;height:335px;background:#ebeae8"></div>
<div style="left:142px;top:408px;width:38px;height:9px;background:#ebeae8"></div>
<div style="left:527px;top:73px;width:1px;height:335px;background:#f2d4d4"></div>
<div style="left:528px;top:73px;width:17px;height:335px;background:#f3f3f3"></div>
<div style="left:532px;top:77px;width:4px;height:2px;background:#333;clip-path:polygon(50% 0,100% 100%,0 100%)"></div>
<div style="left:540px;top:77px;width:4px;height:4px;background:#68b868;border:1px solid #58a858"></div>
<div style="left:533px;top:403px;width:4px;height:2px;background:#333;clip-path:polygon(0 0,100% 0,50% 100%)"></div>
<div style="left:529px;top:220px;width:9px;height:124px;border:1px solid #b8b8b8;border-radius:1px;background:linear-gradient(90deg,#f4f4f4,#dedede 60%,#cfcfcf)"></div>
<div style="left:531px;top:280px;width:5px;height:4px;border-top:1px solid #8a8a8a;border-bottom:1px solid #8a8a8a"></div><div style="left:531px;top:282px;width:5px;height:1px;background:#8a8a8a"></div>
<div style="left:539px;top:341px;width:5px;height:1px;background:#555"></div>
<div style="left:175px;top:408px;width:354px;height:9px;background:#f3f3f3;border-top:1px solid #e6e6e6"></div>
<div style="left:179px;top:411px;width:2px;height:4px;background:#3a3a3a;clip-path:polygon(100% 0,100% 100%,0 50%)"></div>
<div style="left:522px;top:411px;width:2px;height:4px;background:#3a3a3a;clip-path:polygon(0 0,100% 50%,0 100%)"></div>
<div style="left:180px;top:408px;width:336px;height:9px;border:1px solid #b8b8b8;border-radius:1px;background:linear-gradient(#f4f4f4,#dedede 60%,#cfcfcf)"></div>
<div style="left:346px;top:411px;width:4px;height:4px;border-left:1px solid #8a8a8a;border-right:1px solid #8a8a8a"></div><div style="left:348px;top:411px;width:1px;height:4px;background:#8a8a8a"></div>
<div style="left:142px;top:408px;width:38px;height:9px;background:#ebeae8"></div>
<div style="left:174px;top:411px;width:2px;height:4px;background:#3a3a3a;clip-path:polygon(100% 0,100% 100%,0 50%)"></div>
<div style="left:528px;top:408px;width:17px;height:9px;background:#f0f0f0"></div>
<div style="left:171px;top:265px;width:356px;height:9px;background:#edf0f9"></div>
<div class="code" style="left:136px;top:76px;width:20px;text-align:right;font-size:7.2px;letter-spacing:-0.5px;color:#5a5a5a">38</div>
<div class="code" style="left:136px;top:86px;width:20px;text-align:right;font-size:7.2px;letter-spacing:-0.5px;color:#5a5a5a">39</div>
<div class="code" style="left:136px;top:96px;width:20px;text-align:right;font-size:7.2px;letter-spacing:-0.5px;color:#5a5a5a">40</div>
<div class="code" style="left:136px;top:106px;width:20px;text-align:right;font-size:7.2px;letter-spacing:-0.5px;color:#5a5a5a">41</div>
<div class="code" style="left:136px;top:116px;width:20px;text-align:right;font-size:7.2px;letter-spacing:-0.5px;color:#5a5a5a">42</div>
<div class="code" style="left:136px;top:126px;width:20px;text-align:right;font-size:7.2px;letter-spacing:-0.5px;color:#5a5a5a">43</div>
<div class="code" style="left:136px;top:136px;width:20px;text-align:right;font-size:7.2px;letter-spacing:-0.5px;color:#5a5a5a">44</div>
<div class="code" style="left:136px;top:146px;width:20px;text-align:right;font-size:7.2px;letter-spacing:-0.5px;color:#5a5a5a">45</div>
<div class="code" style="left:136px;top:156px;width:20px;text-align:right;font-size:7.2px;letter-spacing:-0.5px;color:#5a5a5a">46</div>
<div class="code" style="left:136px;top:166px;width:20px;text-align:right;font-size:7.2px;letter-spacing:-0.5px;color:#5a5a5a">47</div>
<div class="code" style="left:136px;top:176px;width:20px;text-align:right;font-size:7.2px;letter-spacing:-0.5px;color:#5a5a5a">48</div>
<div class="code" style="left:136px;top:186px;width:20px;text-align:right;font-size:7.2px;letter-spacing:-0.5px;color:#5a5a5a">49</div>
<div class="code" style="left:136px;top:196px;width:20px;text-align:right;font-size:7.2px;letter-spacing:-0.5px;color:#5a5a5a">50</div>
<div class="code" style="left:136px;top:206px;width:20px;text-align:right;font-size:7.2px;letter-spacing:-0.5px;color:#5a5a5a">51</div>
<div class="code" style="left:136px;top:216px;width:20px;text-align:right;font-size:7.2px;letter-spacing:-0.5px;color:#5a5a5a">52</div>
<div class="code" style="left:136px;top:226px;width:20px;text-align:right;font-size:7.2px;letter-spacing:-0.5px;color:#5a5a5a">53</div>
<div class="code" style="left:136px;top:236px;width:20px;text-align:right;font-size:7.2px;letter-spacing:-0.5px;color:#5a5a5a">54</div>
<div class="code" style="left:136px;top:246px;width:20px;text-align:right;font-size:7.2px;letter-spacing:-0.5px;color:#5a5a5a">55</div>
<div class="code" style="left:136px;top:256px;width:20px;text-align:right;font-size:7.2px;letter-spacing:-0.5px;color:#5a5a5a">56</div>
<div class="code" style="left:136px;top:266px;width:20px;text-align:right;font-size:7.2px;letter-spacing:-0.5px;color:#5a5a5a">57</div>
<div class="code" style="left:136px;top:276px;width:20px;text-align:right;font-size:7.2px;letter-spacing:-0.5px;color:#5a5a5a">58</div>
<div class="code" style="left:136px;top:286px;width:20px;text-align:right;font-size:7.2px;letter-spacing:-0.5px;color:#5a5a5a">59</div>
<div class="code" style="left:136px;top:296px;width:20px;text-align:right;font-size:7.2px;letter-spacing:-0.5px;color:#5a5a5a">60</div>
<div class="code" style="left:136px;top:306px;width:20px;text-align:right;font-size:7.2px;letter-spacing:-0.5px;color:#5a5a5a">61</div>
<div class="code" style="left:136px;top:316px;width:20px;text-align:right;font-size:7.2px;letter-spacing:-0.5px;color:#5a5a5a">62</div>
<div class="code" style="left:136px;top:326px;width:20px;text-align:right;font-size:7.2px;letter-spacing:-0.5px;color:#5a5a5a">63</div>
<div class="code" style="left:136px;top:336px;width:20px;text-align:right;font-size:7.2px;letter-spacing:-0.5px;color:#5a5a5a">64</div>
<div class="code" style="left:136px;top:346px;width:20px;text-align:right;font-size:7.2px;letter-spacing:-0.5px;color:#5a5a5a">65</div>
<div class="code" style="left:136px;top:356px;width:20px;text-align:right;font-size:7.2px;letter-spacing:-0.5px;color:#5a5a5a">66</div>
<div class="code" style="left:136px;top:366px;width:20px;text-align:right;font-size:7.2px;letter-spacing:-0.5px;color:#5a5a5a">67</div>
<div class="code" style="left:136px;top:376px;width:20px;text-align:right;font-size:7.2px;letter-spacing:-0.5px;color:#5a5a5a">68</div>
<div style="left:161px;top:73px;width:1px;height:27px;background:#b4b4b4"></div><div style="left:161px;top:99px;width:4px;height:1px;background:#b4b4b4"></div>
<svg style="position:absolute;left:159px;top:157px" width="6" height="6" viewBox="0 0 6 6"><rect x=".5" y=".5" width="5" height="5" fill="#fafafa" stroke="#a8a8a8"/><path d="M1.5 2.5H3.5" stroke="#707070"/></svg>
<div style="left:161px;top:163px;width:1px;height:17px;background:#b4b4b4"></div><div style="left:161px;top:179px;width:4px;height:1px;background:#b4b4b4"></div>
<svg style="position:absolute;left:159px;top:297px" width="6" height="6" viewBox="0 0 6 6"><rect x=".5" y=".5" width="5" height="5" fill="#fafafa" stroke="#a8a8a8"/><path d="M1.5 2.5H3.5" stroke="#707070"/></svg>
<div style="left:161px;top:303px;width:1px;height:17px;background:#b4b4b4"></div><div style="left:161px;top:319px;width:4px;height:1px;background:#b4b4b4"></div>
<div style="left:166px;top:72px;width:361px;height:336px;overflow:hidden">
<div class="code" style="left:5.7px;top:13.5px"><span style="color:#a4a4a4;">#START:has_many</span></div>
<div class="code" style="left:5.7px;top:23.5px"><span style="color:#3030c8;font-weight:bold;">class</span> <span style="font-style:italic;">Product</span> &lt; <span style="font-style:italic;">ActiveRecord::Base</span></div>
<div class="code" style="left:5.7px;top:43.5px">  <span style="font-weight:bold;">has_many</span> <span style="color:#52a4d6;">:orders</span>, <span style="color:#52a4d6;">:through</span> =&gt; <span style="color:#52a4d6;">:line_items</span></div>
<div class="code" style="left:5.7px;top:53.5px"><span style="color:#a4a4a4;">#END:has_many</span></div>
<div class="code" style="left:5.7px;top:63.5px">  <span style="font-weight:bold;">has_many</span> <span style="color:#52a4d6;">:line_items</span></div>
<div class="code" style="left:5.7px;top:83.5px">  <span style="color:#3030c8;">def</span> <span style="color:#3030c8;">self</span>.<span style="font-weight:bold;">find_products_for_sale</span></div>
<div class="code" style="left:5.7px;top:93.5px">    <span style="font-weight:bold;">find</span>(<span style="color:#52a4d6;">:all</span>, <span style="color:#52a4d6;">:order</span> =&gt; <span style="color:#d09038;">&quot;title&quot;</span>)</div>
<div class="code" style="left:5.7px;top:103.5px">  <span style="color:#3030c8;">end</span></div>
<div class="code" style="left:5.7px;top:133.5px">  <span style="color:#a4a4a4;">#START:validation</span></div>
<div class="code" style="left:5.7px;top:143.5px">  <span style="font-weight:bold;">validates_presence_of</span> <span style="color:#52a4d6;">:title</span>, <span style="color:#52a4d6;">:description</span>, <span style="color:#52a4d6;">:image_url</span></div>
<div class="code" style="left:5.7px;top:153.5px">  <span style="font-weight:bold;">validates_numericality_of</span> <span style="color:#52a4d6;">:price</span></div>
<div class="code" style="left:5.7px;top:163.5px">  <span style="font-weight:bold;">validates_uniqueness_of</span> <span style="color:#52a4d6;">:title</span></div>
<div class="code" style="left:5.7px;top:173.5px">  <span style="font-weight:bold;">validates_format_of</span> <span style="color:#52a4d6;">:image_url</span>,</div>
<div class="code" style="left:5.7px;top:183.5px">                      <span style="color:#52a4d6;">:with</span>    =&gt; %r{<span style="color:#a050c8;">\.(gif|jpg|png)$</span>}i,</div>
<div class="code" style="left:5.7px;top:193.5px">                      <span style="color:#52a4d6;">:message</span> =&gt; <span style="color:#d09038;">&quot;must be a URL for a GIF, JPG, or PNG image&quot;</span></div>
<div class="code" style="left:5.7px;top:203.5px">  <span style="font-weight:bold;">protected</span></div>
<div class="code" style="left:5.7px;top:223.5px">  <span style="color:#3030c8;">def</span> <span style="font-weight:bold;">validate</span></div>
<div class="code" style="left:5.7px;top:233.5px">    <span style="font-weight:bold;">errors</span>.add(<span style="color:#52a4d6;">:price</span>, <span style="color:#d09038;">&quot;should be at least 0.01&quot;</span>) <span style="color:#3030c8;">if</span> <span style="font-weight:bold;">price</span>.nil? ||  <span style="font-weight:bold;">price</span> &lt; 0.01</div>
<div class="code" style="left:5.7px;top:243.5px">  <span style="color:#3030c8;">end</span></div>
<div class="code" style="left:5.7px;top:253.5px">  <span style="color:#a4a4a4;">#END:validation</span></div>
<div class="code" style="left:5.7px;top:263.5px"><span style="color:#a4a4a4;">#START:has_many</span></div>
<div class="code" style="left:5.7px;top:273.5px"><span style="color:#3030c8;">end</span></div>
<div class="code" style="left:5.7px;top:283.5px"><span style="color:#a4a4a4;">#END:has_many</span></div>
</div>
<div style="left:548px;top:48px;width:166px;height:370px;border:1px solid #b4b4b4;background:#fff"></div>
<div style="left:548px;top:48px;width:166px;height:12px;border:1px solid #bcbcbc;border-bottom-color:#b0b0b0;background:linear-gradient(#f8f8f8,#eeeeee)"></div>
<div style="left:551px;top:51px;width:1px;height:6px;border-left:1px dotted #8a8a8a"></div>
<div class="ui" style="left:553px;top:50.6px;font-weight:bold;font-size:6.8px;letter-spacing:-0.17px;color:#111">Services</div>
<svg style="position:absolute;left:698px;top:51px" width="6" height="6" viewBox="0 0 6 6"><path d="M0 2.5L2.5 0H6V5H2.5z" fill="#8c8c8c"/><path d="M3.5 1V4" stroke="#d0d0d0" stroke-width=".8"/></svg>
<svg style="position:absolute;left:706px;top:51px" width="5" height="5" viewBox="0 0 5 5"><path d="M.5 .5L4.5 4.5M4.5 .5L.5 4.5" stroke="#8a8a8a" stroke-width="1.2"/></svg>
<div style="left:549px;top:408px;width:164px;height:9px;background:#f3f3f3;border-top:1px solid #e6e6e6"></div>
<div style="left:553px;top:411px;width:2px;height:4px;background:#3a3a3a;clip-path:polygon(100% 0,100% 100%,0 50%)"></div>
<div style="left:706px;top:411px;width:2px;height:4px;background:#3a3a3a;clip-path:polygon(0 0,100% 50%,0 100%)"></div>
<div style="left:559px;top:408px;width:101px;height:9px;border:1px solid #b8b8b8;border-radius:1px;background:linear-gradient(#f4f4f4,#dedede 60%,#cfcfcf)"></div>
<div style="left:607px;top:411px;width:4px;height:4px;border-left:1px solid #8a8a8a;border-right:1px solid #8a8a8a"></div><div style="left:609px;top:411px;width:1px;height:4px;background:#8a8a8a"></div>
<div style="left:549px;top:59px;width:164px;height:349px;overflow:hidden"><div style="left:-549px;top:-59px;width:720px;height:436px">
<div class="vl" style="left:553px;top:68px;width:1px;height:257px"></div>
<div class="vl" style="left:564px;top:68px;width:1px;height:137px"></div>
<div class="vl" style="left:564px;top:228px;width:1px;height:77px"></div>
<div class="vl" style="left:574px;top:118px;width:1px;height:77px"></div>
<div class="vl" style="left:585px;top:128px;width:1px;height:47px"></div>
<div class="vl" style="left:574px;top:258px;width:1px;height:37px"></div>
<div class="vl" style="left:585px;top:268px;width:1px;height:7px"></div>
<div class="hl" style="left:586px;top:134px;width:5px;height:1px"></div>
<div class="hl" style="left:586px;top:144px;width:5px;height:1px"></div>
<div class="hl" style="left:586px;top:154px;width:5px;height:1px"></div>
<div class="hl" style="left:586px;top:274px;width:5px;height:1px"></div>
<div class="hl" style="left:565px;top:84px;width:5px;height:1px"></div>
<div style="left:603px;top:271px;width:48px;height:8px;background:#e8e8e8"></div>
<svg style="position:absolute;left:551px;top:62px" width="6" height="6"><rect x=".5" y=".5" width="5" height="5" fill="#f2f2f2" stroke="#c4c4c4"/><path d="M1 2.5H4" stroke="#7a7a7a"/></svg>
<div class="db dbd" style="left:561px;top:60px"></div>
<div class="ui" style="left:573px;top:61.1px;">Databases</div>
<svg style="position:absolute;left:562px;top:72px" width="6" height="6"><rect x=".5" y=".5" width="5" height="5" fill="#f2f2f2" stroke="#c4c4c4"/><path d="M1 2.5H4" stroke="#7a7a7a"/><path d="M2.5 1V4" stroke="#7a7a7a"/></svg>
<div class="db" style="left:571px;top:70px"></div>
<div class="ui" style="left:584px;top:71.1px;">MySQL Server at localhost:3306 [root]</div>
<div class="db" style="left:571px;top:80px"></div>
<div class="ui" style="left:584px;top:81.1px;">Java DB</div>
<svg style="position:absolute;left:562px;top:92px" width="6" height="6"><rect x=".5" y=".5" width="5" height="5" fill="#f2f2f2" stroke="#c4c4c4"/><path d="M1 2.5H4" stroke="#7a7a7a"/><path d="M2.5 1V4" stroke="#7a7a7a"/></svg>
<div class="fold2" style="left:571px;top:90px"></div>
<div class="ui" style="left:584px;top:91.1px;">Drivers</div>
<svg style="position:absolute;left:562px;top:102px" width="6" height="6"><rect x=".5" y=".5" width="5" height="5" fill="#f2f2f2" stroke="#c4c4c4"/><path d="M1 2.5H4" stroke="#7a7a7a"/><path d="M2.5 1V4" stroke="#7a7a7a"/></svg>
<svg style="position:absolute;left:570px;top:100px" width="10" height="10" viewBox="0 0 10 10"><rect x=".5" y=".5" width="9" height="9" rx="1" fill="#e4d0a0" stroke="#a88850"/><rect x="2" y="2" width="5" height="4" fill="#7aa8d8" stroke="#44709c" stroke-width=".8"/><path d="M5 6.5L8 8.5" stroke="#5a8a5a" stroke-width="1.2"/></svg>
<div class="ui" style="left:584px;top:101.1px;">jdbc:derby://localhost:1527/sample [app on APP]</div>
<svg style="position:absolute;left:562px;top:112px" width="6" height="6"><rect x=".5" y=".5" width="5" height="5" fill="#f2f2f2" stroke="#c4c4c4"/><path d="M1 2.5H4" stroke="#7a7a7a"/></svg>
<svg style="position:absolute;left:570px;top:110px" width="10" height="10" viewBox="0 0 10 10"><rect x=".5" y=".5" width="9" height="9" rx="1" fill="#e4d0a0" stroke="#a88850"/><rect x="2" y="2" width="5" height="4" fill="#7aa8d8" stroke="#44709c" stroke-width=".8"/><path d="M5 6.5L8 8.5" stroke="#5a8a5a" stroke-width="1.2"/></svg>
<div class="ui" style="left:584px;top:111.1px;">jdbc:mysql://localhost:3306/depot_development [root on Default schema]</div>
<svg style="position:absolute;left:572px;top:122px" width="6" height="6"><rect x=".5" y=".5" width="5" height="5" fill="#f2f2f2" stroke="#c4c4c4"/><path d="M1 2.5H4" stroke="#7a7a7a"/></svg>
<div class="db dbd" style="left:582px;top:120px"></div>
<div class="ui" style="left:595px;top:121.1px;font-weight:bold;letter-spacing:-0.17px;">depot_development</div>
<div class="fold3" style="left:591px;top:130px"></div>
<div class="ui" style="left:605px;top:131.1px;">Tables</div>
<div class="fold3" style="left:591px;top:140px"></div>
<div class="ui" style="left:605px;top:141.1px;">Views</div>
<div class="fold3" style="left:591px;top:150px"></div>
<div class="ui" style="left:605px;top:151.1px;">Procedures</div>
<svg style="position:absolute;left:572px;top:162px" width="6" height="6"><rect x=".5" y=".5" width="5" height="5" fill="#f2f2f2" stroke="#c4c4c4"/><path d="M1 2.5H4" stroke="#7a7a7a"/><path d="M2.5 1V4" stroke="#7a7a7a"/></svg>
<div class="db dbd" style="left:582px;top:160px"></div>
<div class="ui" style="left:594px;top:161.1px;">information_schema</div>
<svg style="position:absolute;left:572px;top:172px" width="6" height="6"><rect x=".5" y=".5" width="5" height="5" fill="#f2f2f2" stroke="#c4c4c4"/><path d="M1 2.5H4" stroke="#7a7a7a"/><path d="M2.5 1V4" stroke="#7a7a7a"/></svg>
<div class="db dbd" style="left:582px;top:170px"></div>
<div class="ui" style="left:594px;top:171.1px;">mysql</div>
<svg style="position:absolute;left:572px;top:182px" width="6" height="6"><rect x=".5" y=".5" width="5" height="5" fill="#f2f2f2" stroke="#c4c4c4"/><path d="M1 2.5H4" stroke="#7a7a7a"/><path d="M2.5 1V4" stroke="#7a7a7a"/></svg>
<div class="db dbd" style="left:582px;top:180px"></div>
<div class="ui" style="left:594px;top:181.1px;">states</div>
<svg style="position:absolute;left:572px;top:192px" width="6" height="6"><rect x=".5" y=".5" width="5" height="5" fill="#f2f2f2" stroke="#c4c4c4"/><path d="M1 2.5H4" stroke="#7a7a7a"/><path d="M2.5 1V4" stroke="#7a7a7a"/></svg>
<div class="db dbd" style="left:582px;top:190px"></div>
<div class="ui" style="left:594px;top:191.1px;">test</div>
<svg style="position:absolute;left:562px;top:202px" width="6" height="6"><rect x=".5" y=".5" width="5" height="5" fill="#f2f2f2" stroke="#c4c4c4"/><path d="M1 2.5H4" stroke="#7a7a7a"/><path d="M2.5 1V4" stroke="#7a7a7a"/></svg>
<svg style="position:absolute;left:570px;top:200px" width="10" height="10" viewBox="0 0 10 10"><rect x=".5" y=".5" width="9" height="9" rx="1" fill="#e4d0a0" stroke="#a88850"/><rect x="2" y="2" width="5" height="4" fill="#7aa8d8" stroke="#44709c" stroke-width=".8"/><path d="M5 6.5L8 8.5" stroke="#5a8a5a" stroke-width="1.2"/></svg>
<div class="ui" style="left:584px;top:201.1px;">jdbc:mysql://localhost:3306/states [root on Default schema]</div>
<svg style="position:absolute;left:551px;top:212px" width="6" height="6"><rect x=".5" y=".5" width="5" height="5" fill="#f2f2f2" stroke="#c4c4c4"/><path d="M1 2.5H4" stroke="#7a7a7a"/><path d="M2.5 1V4" stroke="#7a7a7a"/></svg>
<svg style="position:absolute;left:560px;top:210px" width="10" height="10" viewBox="0 0 10 10"><ellipse cx="5" cy="8.3" rx="4.5" ry="1.5" fill="#8878c8" stroke="#5a4a98" stroke-width=".6"/><circle cx="5" cy="4.5" r="4" fill="#4aa060" stroke="#2a6a7a" stroke-width=".8"/><path d="M2 3C3 2 4 4 5.5 3.2S7.5 5 8.5 5.5M2.5 6C4 5.5 5 7 7 6.8" fill="none" stroke="#68b0e0" stroke-width="1"/></svg>
<div class="ui" style="left:573px;top:211.1px;">Web Services</div>
<svg style="position:absolute;left:551px;top:222px" width="6" height="6"><rect x=".5" y=".5" width="5" height="5" fill="#f2f2f2" stroke="#c4c4c4"/><path d="M1 2.5H4" stroke="#7a7a7a"/></svg>
<svg style="position:absolute;left:560px;top:220px" width="10" height="10" viewBox="0 0 10 10"><rect x=".5" y=".5" width="5" height="9" fill="#8a90d8" stroke="#5058a0" stroke-width=".8"/><rect x="5.5" y="2.5" width="4" height="7" fill="#a8aec8" stroke="#6a7090" stroke-width=".8"/><path d="M1.5 3H4.5M1.5 5H4.5M6.3 5H8.7M6.3 7H8.7" stroke="#e8ecf8" stroke-width=".8"/></svg>
<div class="ui" style="left:573px;top:221.1px;">Servers</div>
<svg style="position:absolute;left:562px;top:232px" width="6" height="6"><rect x=".5" y=".5" width="5" height="5" fill="#f2f2f2" stroke="#c4c4c4"/><path d="M1 2.5H4" stroke="#7a7a7a"/><path d="M2.5 1V4" stroke="#7a7a7a"/></svg>
<svg style="position:absolute;left:570px;top:230px" width="11" height="9" viewBox="0 0 11 9"><path d="M1 1L3.5 3L5 1.5L6.5 3L9.5 1L8.5 5L10 8H6.5L5 6.5L3.5 8H0.5L2 5z" fill="#e8b050" stroke="#a87020" stroke-width=".8"/><circle cx="3.8" cy="4.6" r=".7" fill="#5a3a10"/><circle cx="6.6" cy="4.6" r=".7" fill="#5a3a10"/></svg>
<div class="ui" style="left:584px;top:231.1px;">Apache Tomcat 6.0.18</div>
<svg style="position:absolute;left:562px;top:242px" width="6" height="6"><rect x=".5" y=".5" width="5" height="5" fill="#f2f2f2" stroke="#c4c4c4"/><path d="M1 2.5H4" stroke="#7a7a7a"/><path d="M2.5 1V4" stroke="#7a7a7a"/></svg>
<svg style="position:absolute;left:571px;top:240px" width="10" height="9" viewBox="0 0 10 9"><path d="M9 .8C6 .8 1.5 3 .8 5.2C2.5 7.8 6 8.2 8.2 7.2" fill="none" stroke="#303840" stroke-width="1"/><path d="M5 1.5C4.2 3 4.2 5 5.2 6.5" fill="none" stroke="#8090a0" stroke-width=".7"/><circle cx="3.6" cy="4.4" r=".8" fill="#202020"/></svg>
<div class="ui" style="left:584px;top:241.1px;">GlassFish v2.1</div>
<svg style="position:absolute;left:562px;top:252px" width="6" height="6"><rect x=".5" y=".5" width="5" height="5" fill="#f2f2f2" stroke="#c4c4c4"/><path d="M1 2.5H4" stroke="#7a7a7a"/></svg>
<svg style="position:absolute;left:571px;top:250px" width="10" height="9" viewBox="0 0 10 9"><path d="M9 .8C6 .8 1.5 3 .8 5.2C2.5 7.8 6 8.2 8.2 7.2" fill="none" stroke="#303840" stroke-width="1"/><path d="M5 1.5C4.2 3 4.2 5 5.2 6.5" fill="none" stroke="#8090a0" stroke-width=".7"/><circle cx="3.6" cy="4.4" r=".8" fill="#202020"/></svg>
<svg style="position:absolute;left:580px;top:255px" width="4" height="5" viewBox="0 0 4 5"><path d="M0 0L4 2.5 0 5z" fill="#30a040"/></svg>
<div class="ui" style="left:584px;top:251.1px;">GlassFish v3 Domain</div>
<svg style="position:absolute;left:572px;top:262px" width="6" height="6"><rect x=".5" y=".5" width="5" height="5" fill="#f2f2f2" stroke="#c4c4c4"/><path d="M1 2.5H4" stroke="#7a7a7a"/></svg>
<svg style="position:absolute;left:582px;top:260px" width="9" height="10" viewBox="0 0 9 10"><rect x=".5" y="1.5" width="7" height="8" fill="#f4d878" stroke="#c8a040" stroke-width=".8"/><rect x="1" y="2" width="2" height="7" fill="#fcefc0"/><path d="M3.5 .5H7L8.5 2V7H3.5z" fill="#f8f0d8" stroke="#b09858" stroke-width=".6"/></svg>
<div class="ui" style="left:594px;top:261.1px;">Applications</div>
<svg style="position:absolute;left:592px;top:270px" width="9" height="9"><rect x=".5" y=".5" width="7.5" height="8" rx="1.2" fill="#c04850" stroke="#902c34"/><path d="M6 2.2C4.2 2.2 3.4 3.6 3.6 5.2L3 7.2H4.8L4.6 5.4C4.5 4.2 5 3.6 6.2 3.6z" fill="#fbe8e8"/></svg>
<div class="ui" style="left:605px;top:271.1px;">Depot_Application</div>
<svg style="position:absolute;left:572px;top:282px" width="6" height="6"><rect x=".5" y=".5" width="5" height="5" fill="#f2f2f2" stroke="#c4c4c4"/><path d="M1 2.5H4" stroke="#7a7a7a"/><path d="M2.5 1V4" stroke="#7a7a7a"/></svg>
<svg style="position:absolute;left:581px;top:280px" width="11" height="10" viewBox="0 0 11 10"><rect x=".5" y="2.5" width="5" height="5" fill="#f0c850" stroke="#b08a20" stroke-width=".8"/><rect x="4.5" y=".5" width="5" height="5" fill="#68a8e0" stroke="#3a70a8" stroke-width=".8"/><rect x="3.5" y="4.5" width="5" height="5" fill="#78c058" stroke="#3a8a30" stroke-width=".8"/></svg>
<div class="ui" style="left:594px;top:281.1px;">Resources</div>
<svg style="position:absolute;left:562px;top:292px" width="6" height="6"><rect x=".5" y=".5" width="5" height="5" fill="#f2f2f2" stroke="#c4c4c4"/><path d="M1 2.5H4" stroke="#7a7a7a"/><path d="M2.5 1V4" stroke="#7a7a7a"/></svg>
<svg style="position:absolute;left:571px;top:290px" width="10" height="9" viewBox="0 0 10 9"><rect x=".5" y=".5" width="5" height="8" fill="#c4c4cc" stroke="#7a7a88"/><rect x="1.5" y="2" width="3" height="1" fill="#8a8a98"/><rect x="4.5" y="2.5" width="5" height="6" rx="1" fill="#c83a40" stroke="#902028" stroke-width=".8"/><path d="M7.8 3.5C6.8 3.5 6.3 4.3 6.4 5.3L6 7.5H7.2L7.1 5.5C7.1 4.8 7.4 4.4 8.2 4.4z" fill="#fbe0e0"/></svg>
<div class="ui" style="left:584px;top:291.1px;">WEBrick (Built-in JRuby 1.4.0)</div>
<svg style="position:absolute;left:562px;top:302px" width="6" height="6"><rect x=".5" y=".5" width="5" height="5" fill="#f2f2f2" stroke="#c4c4c4"/><path d="M1 2.5H4" stroke="#7a7a7a"/><path d="M2.5 1V4" stroke="#7a7a7a"/></svg>
<svg style="position:absolute;left:571px;top:300px" width="10" height="9" viewBox="0 0 10 9"><rect x=".5" y=".5" width="5" height="8" fill="#c4c4cc" stroke="#7a7a88"/><rect x="1.5" y="2" width="3" height="1" fill="#8a8a98"/><rect x="4.5" y="2.5" width="5" height="6" rx="1" fill="#c83a40" stroke="#902028" stroke-width=".8"/><path d="M7.8 3.5C6.8 3.5 6.3 4.3 6.4 5.3L6 7.5H7.2L7.1 5.5C7.1 4.8 7.4 4.4 8.2 4.4z" fill="#fbe0e0"/></svg>
<div class="ui" style="left:584px;top:301.1px;">WEBrick (Ruby 1.8.7-p72)</div>
<svg style="position:absolute;left:551px;top:312px" width="6" height="6"><rect x=".5" y=".5" width="5" height="5" fill="#f2f2f2" stroke="#c4c4c4"/><path d="M1 2.5H4" stroke="#7a7a7a"/><path d="M2.5 1V4" stroke="#7a7a7a"/></svg>
<svg style="position:absolute;left:560px;top:310px" width="10" height="10" viewBox="0 0 10 10"><path d="M.5 .5H7.5V3H5.5V9.5H2.5V3H.5z" fill="#88b0e0" stroke="#4a70a8" stroke-width=".8"/><circle cx="6.8" cy="6.8" r="2.6" fill="#f0c838" stroke="#a88a18" stroke-width=".8"/></svg>
<div class="ui" style="left:573px;top:311.1px;">Hudson Builders</div>
<svg style="position:absolute;left:551px;top:322px" width="6" height="6"><rect x=".5" y=".5" width="5" height="5" fill="#f2f2f2" stroke="#c4c4c4"/><path d="M1 2.5H4" stroke="#7a7a7a"/><path d="M2.5 1V4" stroke="#7a7a7a"/></svg>
<svg style="position:absolute;left:560px;top:320px" width="10" height="10" viewBox="0 0 10 10"><path d="M.5 1.5H4L5 2.5H9.5V9.5H.5z" fill="#98aac8" stroke="#5a6e90" stroke-width=".8"/><rect x="4.5" y="5" width="4.5" height="4" fill="#e8c040" stroke="#8a6a10" stroke-width=".8"/></svg>
<div class="ui" style="left:573px;top:321.1px;">Issue Trackers</div>
</div></div>
<div style="left:4px;top:418px;width:712px;height:14px;background:#f0f0f0;border-top:1px solid #e0e0e0"></div>
<svg style="position:absolute;left:661px;top:421px" width="10" height="10" viewBox="0 0 10 10"><rect x=".5" y=".5" width="9" height="9" rx="1.5" fill="#a4a4a4" stroke="#7a7a7a"/><path d="M4 2.5Q2.5 5 4 7.5M6 2.5Q7.5 5 6 7.5" fill="none" stroke="#f4f4f4" stroke-width="1"/></svg>
<div class="ui" style="left:680px;top:422px;font-size:6.4px;color:#222">57:5</div>
<div style="left:701px;top:421px;width:1px;height:10px;background:#c8c8c8"></div>
<div class="ui" style="left:704px;top:422px;font-size:6.4px;color:#222">INS</div></body></html>
